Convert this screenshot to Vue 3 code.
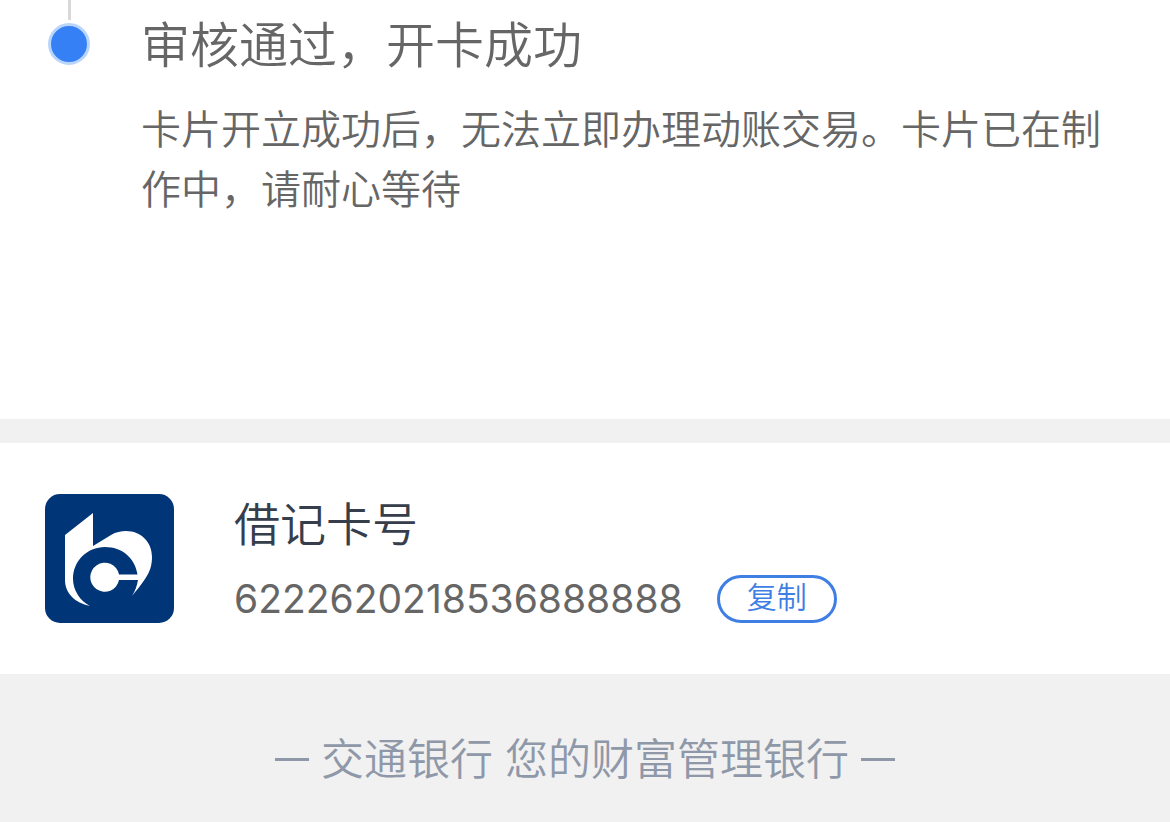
<script setup>
import { ref } from 'vue'

const cardNumber = '6222620218536888888'
const copied = ref(false)

function copyNumber() {
  navigator.clipboard?.writeText(cardNumber)
  copied.value = true
}
</script>

<template>
  <main class="page">
    <section class="progress">
      <div class="rail">
        <span class="line"></span>
        <span class="dot"></span>
      </div>
      <div class="step">
        <h1 class="step-title">审核通过，开卡成功</h1>
        <p class="step-text">卡片开立成功后，无法立即办理动账交易。卡片已在制作中，请耐心等待</p>
      </div>
    </section>

    <section class="card">
      <svg class="logo" viewBox="0 0 129 129" aria-hidden="true">
        <rect width="129" height="129" rx="15" fill="#003577" />
        <path d="M20 41 L48 19 V52 L66 41 C71 38 76 37 81 37 C96 37 107 48 107 63 C107 71 105 78 100 85 C96 91 91 97 87 102 C90 97 92 92 93 86 H74 A14.500 14.500 0 1 1 74 80.500 H92.500 C90 64 77 53 60 53 C42 53 28 67 28 85 C28 96 35 107 45 112 C30 109 20 99 20 86 Z" fill="#fff" />
      </svg>
      <div class="info">
        <h2 class="label">借记卡号</h2>
        <div class="number-row">
          <span class="number">{{ cardNumber }}</span>
          <button class="copy" type="button" @click="copyNumber">复制</button>
        </div>
      </div>
    </section>

    <footer class="footer">
      <span class="dash"></span>
      <span>交通银行 您的财富管理银行</span>
      <span class="dash"></span>
    </footer>
  </main>
</template>

<style>
body {
  background: #f1f1f1;
}
</style>

<style scoped>
.page {
  font-family: Inter, "Noto Sans CJK SC", sans-serif;
  font-weight: 350;
  color: #666;
}
.progress {
  display: flex;
  gap: 51px;
  min-height: 419px;
  padding: 0 60px 0 48px;
  box-sizing: border-box;
  background: #fff;
}
.rail {
  display: flex;
  flex: none;
  flex-direction: column;
  align-items: center;
  width: 42px;
}
.line {
  width: 3px;
  height: 20px;
  background: #d8d8d8;
}
.dot {
  width: 36px;
  height: 36px;
  margin-top: 3px;
  border: 3px solid #b9d5fb;
  border-radius: 50%;
  background: #3680f5;
}
.step {
  flex: 1;
  padding-top: 10px;
}
.step-title {
  margin: 0;
  font-size: 49px;
  font-weight: 350;
  line-height: 72px;
}
.step-text {
  margin: 18px 0 0;
  font-size: 40px;
  line-height: 60px;
}
.card {
  display: flex;
  align-items: center;
  gap: 60px;
  margin-top: 24px;
  padding: 51px 45px;
  background: #fff;
}
.logo {
  flex: none;
  width: 129px;
  height: 129px;
}
.label {
  margin: 0;
  color: #363e4c;
  font-size: 46px;
  font-weight: 350;
  line-height: 60px;
}
.number-row {
  display: flex;
  align-items: center;
  gap: 34px;
  margin-top: 21px;
}
.number {
  font-size: 39px;
  font-weight: 400;
  line-height: 48px;
}
.copy {
  width: 120px;
  height: 48px;
  padding: 0 0 4px;
  border: 3px solid #3f7fe4;
  border-radius: 24px;
  background: #fff;
  color: #3f7fe4;
  font: 350 30px/38px Inter, "Noto Sans CJK SC", sans-serif;
}
.footer {
  display: flex;
  align-items: center;
  justify-content: center;
  gap: 12px;
  padding: 54px 24px 32px;
  color: #8f98a8;
  font-size: 43px;
  line-height: 62px;
}
.dash {
  width: 34px;
  height: 3px;
  background: #8f98a8;
}
</style>
